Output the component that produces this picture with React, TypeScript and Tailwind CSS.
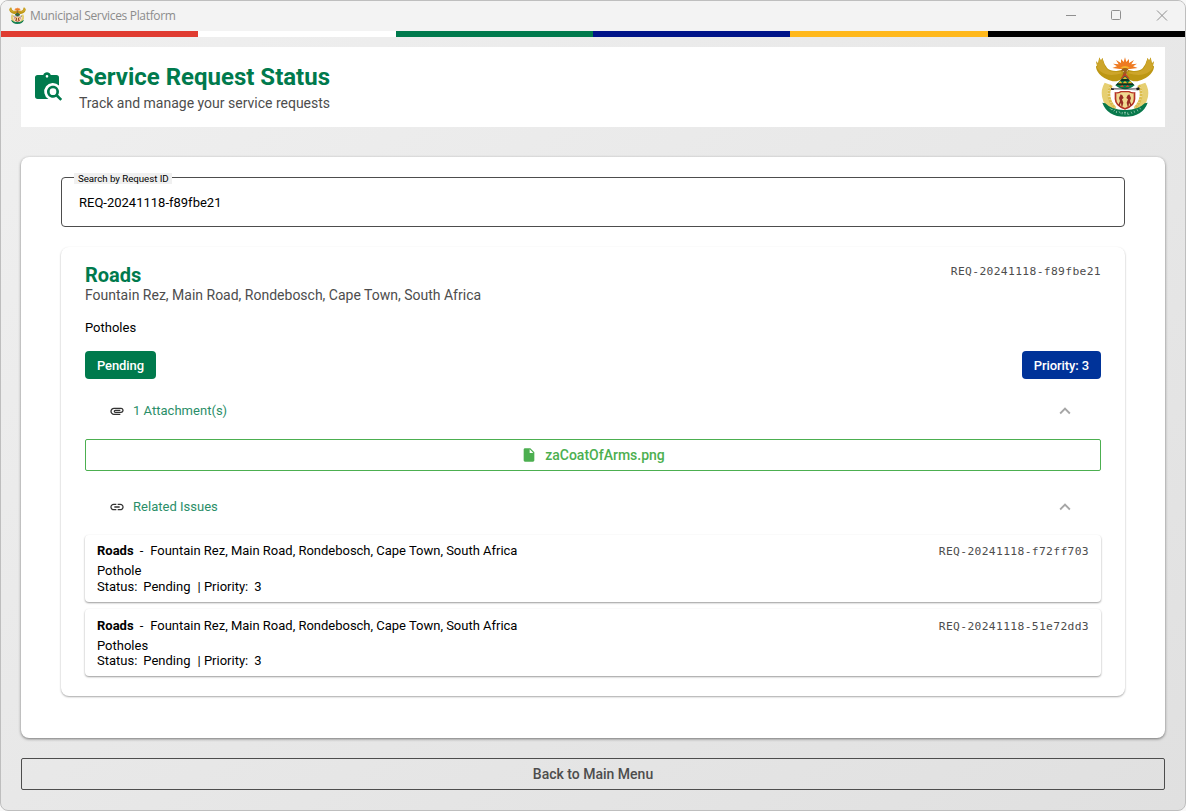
import React from "react";
import { MdAttachment, MdLink, MdInsertDriveFile, MdKeyboardArrowUp } from "react-icons/md";

function CoatOfArms({ className, viewBox = "0 0 210 210" }: { className: string; viewBox?: string }) {
  return (
    <svg className={className} viewBox={viewBox} aria-hidden="true">
      <path d="M105 22l4 14 8-9 0 12 15-9-8 13 17-2-12 8 14 5-23 3H90l-23-3 14-5-12-8 17 2-8-13 15 9 0-12 8 9z" fill="#ee7a22" />
      <path d="M90 55q15-14 30 0z" fill="#f6b32c" />
      <path d="M44 98q-12 20-8 42 5 33 44 48l8-7q-32-15-35-44-2-18 8-33z" fill="#e6cf72" />
      <path d="M166 98q12 20 8 42-5 33-44 48l-8-7q32-15 35-44 2-18-8-33z" fill="#e6cf72" />
      <path d="M64 106q-11 20-6 38 4 18 18 30" fill="none" stroke="#dcbd4c" strokeWidth="9" strokeDasharray="8 1" />
      <path d="M146 106q11 20 6 38-4 18-18 30" fill="none" stroke="#dcbd4c" strokeWidth="9" strokeDasharray="8 1" />
      <path d="M28 22l5 10 4-9 7 20 8 12q10 9 28 8l14-3 8 7-5 21-17 6H68Q42 88 28 72 17 58 18 47l3 2-3-16 6 7z" fill="#bd9714" />
      <path d="M182 22l-5 10-4-9-7 20-8 12q-10 9-28 8l-14-3-8 7 5 21 17 6h12q26-6 40-22 11-14 10-25l-3 2 3-16-6 7z" fill="#bd9714" />
      <path d="M28 24l5 9 4-8 6 20q6 14 16 18 12 5 34 2l3 5q-34 10-56 0Q24 62 19 49l4 1-4-15 6 7z" fill="#cda52a" />
      <path d="M182 24l-5 9-4-8-6 20q-6 14-16 18-12 5-34 2l-3 5q34 10 56 0 16-8 21-21l-4 1 4-15-6 7z" fill="#cda52a" />
      <path d="M93 64q1-9 12-10 11 1 12 10l-6-3-2 18H97l4-16z" fill="#9a641d" />
      <path d="M105 69l14 17H91z" fill="#c33d25" />
      <path d="M105 77l29 29q-14 12-29 12-15 0-29-12z" fill="#087849" />
      <path d="M95 88h20l4 4H90zM83 100h44l5 4H78z" fill="#151b14" />
      <path d="M91 93l6 7H84zM105 93l7 7H98zM120 93l7 7h-14z" fill="#f0b524" />
      <path d="M98 87l7-7 7 7z" fill="#e8b72c" />
      <path d="M97 105l5 6H89zM113 105l6 6h-13z" fill="#d64226" />
      <path d="M66 118l78-3M67 115l77 5" stroke="#282528" strokeWidth="1.5" />
      <path d="M63 114l9 2-1 4-8-1zM139 114l7-2 4 5-5 4-6-2z" fill="#171719" />
      <path d="M74 126q10 2 18-3h26q8 5 18 3v21q0 22-31 32-31-10-31-32z" fill="#b53325" />
      <path d="M79 130q10 1 15-3h22q6 4 15 3v17q0 18-26 27-26-9-26-27z" fill="#f0d990" />
      <path d="M92 133l5 3 4 8-5 4 4 10-3 12-3-1-1-11-5 10-3-2 5-13-3-9zM118 133l-5 3-4 8 5 4-4 10 3 12 3-1 1-11 5 10 3-2-5-13 3-9z" fill="#982d24" />
      <path d="M37 158l9 2q20 21 59 20 39 1 59-20l9-2q-15 42-68 42-53 0-68-42z" fill="#08784b" />
      <path d="M60 175l4 4 4-1M71 184l4-5M80 183l-1 6M87 184l4 6M97 186l-1 7M102 187h6m-3 0v7M113 187v6h5M123 185l3 6M132 182l2 6M141 178l3 6M149 173l3 5" stroke="#b9dcc8" strokeWidth="2" fill="none" />
    </svg>
  );
}

function ClipboardSearch() {
  return (
    <svg className="size-8 shrink-0" viewBox="0 0 24 24" aria-hidden="true">
      <path fill="#007a4d" d="M19 3h-4.180C14.400 1.840 13.300 1 12 1s-2.400.84-2.820 2H5a2 2 0 0 0-2 2v14a2 2 0 0 0 2 2h8.100A6.500 6.500 0 1 1 21 10.800V5a2 2 0 0 0-2-2zm-7 0a1 1 0 1 1 0 2 1 1 0 0 1 0-2z" />
      <path fill="#007a4d" fillRule="evenodd" d="M16.500 11c2.500 0 4.500 2 4.500 4.500 0 .88-.25 1.710-.69 2.400l3.080 3.100L22 22.390l-3.120-3.070c-.69.43-1.510.68-2.380.68-2.500 0-4.500-2-4.500-4.500s2-4.500 4.500-4.500m0 2a2.500 2.500 0 1 0 0 5 2.500 2.500 0 0 0 0-5z" />
    </svg>
  );
}

function TitleBar() {
  return (
    <div className="flex h-[30px] shrink-0 items-center bg-[#f3f3f3] pl-2">
      <CoatOfArms className="-mt-0.5 size-[17px]" viewBox="15 20 180 180" />
      <span className="ml-1 font-['Open_Sans',sans-serif] text-[12px] leading-4 tracking-[-0.33px] text-[#8c8c8c]">
        Municipal Services Platform
      </span>
      <svg className="ml-auto h-[30px] w-[138px]" viewBox="0 0 138 30" fill="none" stroke="#8f8f8f" aria-hidden="true">
        <path d="M19 14.500h10" />
        <rect x="64.500" y="9.500" width="9" height="9" rx="1" />
        <path d="M110 9.500l10 10M120 9.500l-10 10" />
      </svg>
    </div>
  );
}

function SectionHeader({ icon, label }: { icon: React.ReactNode; label: string }) {
  return (
    <div className="flex h-12 items-center pl-6 pr-[25px]">
      {icon}
      <span className="ml-2 text-[13px] leading-4 tracking-[0.02px] text-[#2a8e68]">{label}</span>
      <MdKeyboardArrowUp className="ml-auto size-[22px] stroke-current text-[#a6a6a6]" />
    </div>
  );
}

const issues = [
  { id: "REQ-20241118-f72ff703", text: "Pothole" },
  { id: "REQ-20241118-51e72dd3", text: "Potholes" },
];

function RequestId({ id }: { id: string }) {
  return (
    <span className="pt-px font-['DejaVu_Sans_Mono',monospace] text-[11.300px] leading-4 tracking-[0.35px] text-[#4d4d4d]">{id}</span>
  );
}

function IssueCard({ id, text }: { id: string; text: string }) {
  return (
    <div className="group h-[67px] rounded bg-white px-3 pt-2 text-[13px] text-black shadow-[0_1px_2px_rgba(0,0,0,0.4)] last:pt-[9px]">
      <div className="flex h-4 items-center justify-between">
        <div className="flex">
          <span className="font-bold">Roads</span>
          <span className="ml-1.5">-</span>
          <span className="ml-[7px] tracking-[-0.01px]">Fountain Rez, Main Road, Rondebosch, Cape Town, South Africa</span>
        </div>
        <RequestId id={id} />
      </div>
      <div className="mt-1 h-4 leading-4 group-last:h-[15px]">{text}</div>
      <div className="flex h-4 items-center">
        <span>Status:</span>
        <span className="ml-1.5">Pending</span>
        <span className="ml-[7px]">| Priority:</span>
        <span className="ml-1.5">3</span>
      </div>
    </div>
  );
}

export default function App() {
  return (
    <div className="h-[811px] w-[1186px] overflow-hidden bg-[#f8f8f8] font-['Roboto',sans-serif]">
      <div className="flex h-full flex-col overflow-hidden rounded-lg border border-[#bebebe] bg-linear-to-br from-[#f0f0f0] to-[#e0e0e0]">
        <TitleBar />
        <div className="grid h-1.5 shrink-0 grid-cols-6">
          <div className="bg-[#e03c31]" />
          <div className="bg-white" />
          <div className="bg-[#007a4d]" />
          <div className="bg-[#001489]" />
          <div className="bg-[#ffb81c]" />
          <div className="bg-black" />
        </div>

        <div className="flex flex-1 flex-col px-5 pt-2.5">
          <header className="flex h-20 items-center bg-white pl-[10px] pr-[5px]">
            <ClipboardSearch />
            <div className="ml-4">
              <h1 className="text-[24px] font-bold leading-7 text-[#007a4d]">Service Request Status</h1>
              <p className="mt-1 text-[14px] leading-4 text-[#4d4d4d]">Track and manage your service requests</p>
            </div>
            <CoatOfArms className="-mt-1 ml-auto size-[70px]" />
          </header>

          <main className="mt-[30px] h-[581px] rounded-lg bg-white px-10 pt-5 shadow-[0_1px_3px_rgba(0,0,0,0.5)]">
            <div className="relative flex h-[50px] items-center rounded border border-[#4d4d4d] pl-[17px] pt-0.5">
              <label className="absolute -top-[5px] left-3 h-[11px] bg-[#f0f0f0] pl-1 pr-[3px] text-[9.750px] leading-[12px] tracking-[-0.06px] text-black">
                Search by Request ID
              </label>
              <span className="text-[13px] text-black">REQ-20241118-f89fbe21</span>
            </div>

            <section className="mt-5 h-[449px] rounded-lg bg-white px-6 pt-4 shadow-[0_1px_2px_rgba(0,0,0,0.35)]">
              <div className="flex h-6 items-start justify-between">
                <h2 className="text-[20px] font-bold leading-6 text-[#007a4d]">Roads</h2>
                <RequestId id="REQ-20241118-f89fbe21" />
              </div>
              <p className="text-[14px] leading-4 text-[#4d4d4d]">Fountain Rez, Main Road, Rondebosch, Cape Town, South Africa</p>
              <p className="mt-[17px] text-[13px] leading-4 text-black">Potholes</p>
              <div className="mt-[15px] flex h-7 justify-between text-[13px] font-medium leading-[29px] tracking-[-0.1px] text-white">
                <span className="rounded bg-[#007a4d] px-3">Pending</span>
                <span className="rounded bg-[#003399] px-3">Priority: 3</span>
              </div>

              <div className="mt-2">
                <SectionHeader icon={<MdAttachment className="size-4 text-[#333333]" />} label="1 Attachment(s)" />
              </div>
              <button className="mt-1 flex h-8 w-full items-center justify-center rounded-[2px] border border-[#4caf50] text-[14px] font-medium text-[#4caf50]">
                <MdInsertDriveFile className="mr-2 size-4" />
                zaCoatOfArms.png
              </button>
              <div className="mt-3">
                <SectionHeader icon={<MdLink className="size-4 text-[#333333]" />} label="Related Issues" />
              </div>
              <div className="mt-1 flex flex-col gap-[7px]">
                {issues.map((issue) => (
                  <IssueCard key={issue.id} id={issue.id} text={issue.text} />
                ))}
              </div>
            </section>
          </main>

          <button className="mt-5 h-8 shrink-0 rounded-[2px] border border-[#4d4d4d] text-[14px] font-medium text-[#4d4d4d]">
            Back to Main Menu
          </button>
        </div>
      </div>
    </div>
  );
}
